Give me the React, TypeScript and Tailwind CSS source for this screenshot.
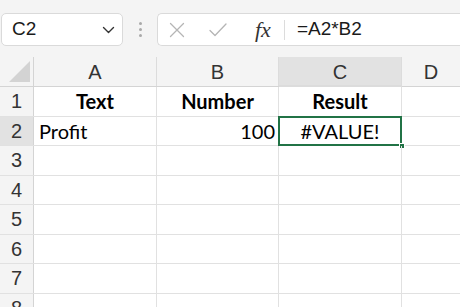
import React from 'react';

const cols = [
  { key: 'A', w: 'w-[123px]' },
  { key: 'B', w: 'w-[122px]' },
  { key: 'C', w: 'w-[123px]' },
  { key: 'D', w: 'flex-1' },
];

const data: Record<number, { A?: string; B?: string; C?: string }> = {
  1: { A: 'Text', B: 'Number', C: 'Result' },
  2: { A: 'Profit', B: '100', C: '#VALUE!' },
};

const App: React.FC = () => {
  return (
    <div className="w-[460px] h-[307px] overflow-hidden bg-white font-['Liberation_Sans',sans-serif] text-[#1a1a1a]">
      {/* toolbar */}
      <div className="h-[57px] bg-[#f4f4f4] flex items-start pt-[13px] pl-[1px]">
        <div className="w-[122px] h-[33px] rounded-[5px] border border-[#dadada] bg-white flex items-center pl-[10px] pr-[6px]">
          <span className="text-[19px] text-[#1a1a1a] flex-1">C2</span>
          <svg width="13" height="8" viewBox="0 0 13 8" className="mr-[1px]">
            <path d="M1.5 1.5 L6.5 6.5 L11.5 1.5" fill="none" stroke="#333" strokeWidth="1.4" strokeLinecap="round" strokeLinejoin="round" />
          </svg>
        </div>
        <div className="w-[34px] h-[33px] flex flex-col items-center justify-center gap-[3px]">
          <span className="w-[3px] h-[3px] rounded-full bg-[#a9a9a9]" />
          <span className="w-[3px] h-[3px] rounded-full bg-[#a9a9a9]" />
          <span className="w-[3px] h-[3px] rounded-full bg-[#a9a9a9]" />
        </div>
        <div className="flex-1 h-[33px] rounded-l-[5px] border border-r-0 border-[#dadada] bg-white flex items-center">
          <svg width="16" height="16" viewBox="0 0 16 16" className="ml-[11px]">
            <path d="M1.5 1.5 L14.5 14.5 M14.5 1.5 L1.5 14.5" stroke="#b5b5b5" strokeWidth="1.3" strokeLinecap="round" />
          </svg>
          <svg width="18" height="14" viewBox="0 0 18 14" className="ml-[24px]">
            <path d="M1 7.5 L6 12.5 L17 1" fill="none" stroke="#b5b5b5" strokeWidth="1.3" strokeLinecap="round" strokeLinejoin="round" />
          </svg>
          <span className="ml-[28px] font-['Liberation_Serif',serif] italic text-[22px] text-[#333] leading-none">fx</span>
          <span className="ml-[13px] w-px h-[20px] bg-[#dcdcdc]" />
          <span className="ml-[12px] text-[19px] text-[#1a1a1a]">=A2*B2</span>
        </div>
      </div>

      {/* column headers */}
      <div className="flex h-[30px] bg-[#f4f4f4] border-b border-[#d4d4d4]">
        <div className="w-[34px] border-r border-[#d4d4d4] flex items-end justify-end pr-[3px] pb-[4px]">
          <svg width="21" height="21" viewBox="0 0 21 21">
            <path d="M21 0 L21 21 L0 21 Z" fill="#d3d3d3" />
          </svg>
        </div>
        {cols.map((c) => (
          <div
            key={c.key}
            className={`${c.w} flex items-center justify-center text-[20px] text-[#333] ${
              c.key === 'C' ? 'bg-[#e2e2e2] border-b-2 border-[#217346] -mb-px' : ''
            } ${c.key !== 'D' ? 'border-r border-[#dcdcdc]' : ''}`}
          >
            <span className={c.key === 'C' ? 'mt-[2px]' : ''}>{c.key}</span>
          </div>
        ))}
      </div>

      {/* rows */}
      {[1, 2, 3, 4, 5, 6, 7, 8].map((r) => {
        const row = data[r] || {};
        return (
          <div key={r} className="flex h-[29.5px] border-b border-[#e1e1e1]">
            <div
              className={`w-[34px] shrink-0 border-r border-[#d4d4d4] flex items-center justify-center text-[20px] text-[#333] ${
                r === 2 ? 'bg-[#e2e2e2]' : 'bg-[#f4f4f4]'
              }`}
            >
              {r}
            </div>
            <div className="w-[123px] border-r border-[#e1e1e1] flex items-center justify-center font-['Lato',sans-serif] text-[20px] text-black">
              {r === 1 && <span className="font-bold">{row.A}</span>}
              {r === 2 && <span className="w-full pl-[5px]">{row.A}</span>}
            </div>
            <div className="w-[122px] border-r border-[#e1e1e1] flex items-center font-['Lato',sans-serif] text-[20px] text-black">
              {r === 1 && <span className="w-full text-center font-bold">{row.B}</span>}
              {r === 2 && <span className="w-full text-right pr-[3px]">{row.B}</span>}
            </div>
            <div className="relative w-[123px] border-r border-[#e1e1e1] flex items-center justify-center font-['Lato',sans-serif] text-[20px] text-black">
              {r === 1 && <span className="font-bold">{row.C}</span>}
              {r === 2 && (
                <>
                  <span>{row.C}</span>
                  <span className="absolute -left-px -top-px -right-px -bottom-px border-2 border-[#217346]" />
                  <span className="absolute -right-[4px] -bottom-[4px] w-[6px] h-[6px] bg-[#217346] border border-white" />
                </>
              )}
            </div>
            <div className="flex-1" />
          </div>
        );
      })}
    </div>
  );
};

export default App;
